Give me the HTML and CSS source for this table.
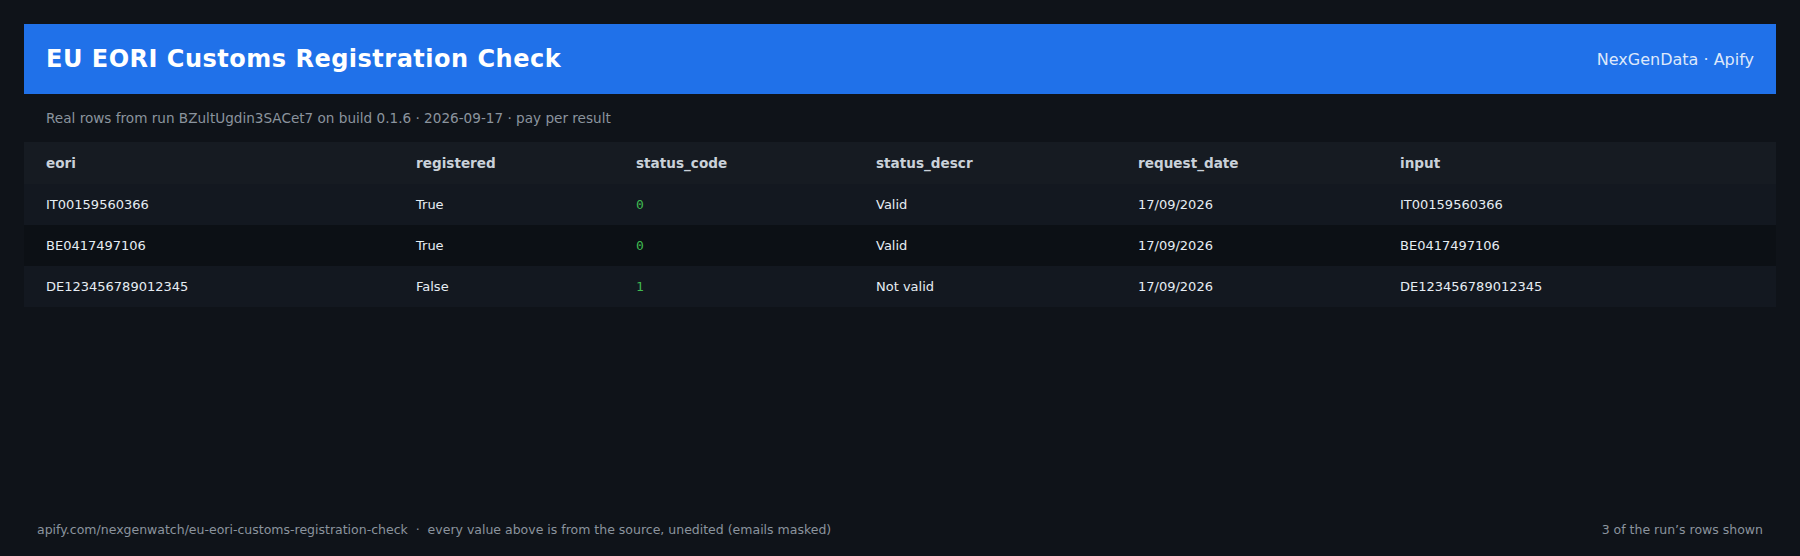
FILE: index.html
```html
<!DOCTYPE html>
<html lang="en">
<head>
<meta charset="utf-8">
<title>EU EORI Customs Registration Check</title>
<link rel="stylesheet" href="styles.css">
</head>
<body>
<div class="page">
  <header class="banner">
    <h1 class="title">EU EORI Customs Registration Check</h1>
    <div class="brand">NexGenData · Apify</div>
  </header>
  <p class="subtitle">Real rows from run BZultUgdin3SACet7 on build 0.1.6 · 2026-09-17 · pay per result</p>
  <table class="data">
    <colgroup>
      <col class="c-eori">
      <col class="c-reg">
      <col class="c-code">
      <col class="c-descr">
      <col class="c-date">
      <col class="c-input">
    </colgroup>
    <thead>
      <tr>
        <th>eori</th>
        <th>registered</th>
        <th>status_code</th>
        <th>status_descr</th>
        <th>request_date</th>
        <th>input</th>
      </tr>
    </thead>
    <tbody>
      <tr>
        <td>IT00159560366</td>
        <td>True</td>
        <td class="num">0</td>
        <td>Valid</td>
        <td>17/09/2026</td>
        <td>IT00159560366</td>
      </tr>
      <tr>
        <td>BE0417497106</td>
        <td>True</td>
        <td class="num">0</td>
        <td>Valid</td>
        <td>17/09/2026</td>
        <td>BE0417497106</td>
      </tr>
      <tr>
        <td>DE123456789012345</td>
        <td>False</td>
        <td class="num">1</td>
        <td>Not valid</td>
        <td>17/09/2026</td>
        <td>DE123456789012345</td>
      </tr>
    </tbody>
  </table>
  <footer class="foot">
    <span>apify.com/nexgenwatch/eu-eori-customs-registration-check &nbsp;·&nbsp; every value above is from the source, unedited (emails masked)</span>
    <span>3 of the run’s rows shown</span>
  </footer>
</div>
</body>
</html>
```
FILE: styles.css
```css
* { box-sizing: border-box; }

html, body {
  margin: 0;
  padding: 0;
  background: #0f1319;
  font-family: "DejaVu Sans", "Liberation Sans", sans-serif;
}

.page {
  height: 556px;
  padding: 24px 24px 0;
  display: flex;
  flex-direction: column;
}

.banner {
  height: 70px;
  background: #2071e9;
  display: flex;
  align-items: center;
  justify-content: space-between;
  padding: 0 22px;
}

.title {
  margin: 0;
  font-size: 24px;
  font-weight: bold;
  color: #ffffff;
  letter-spacing: 0.5px;
}

.brand {
  font-size: 16px;
  color: #dde8fb;
}

.subtitle {
  margin: 14px 0;
  padding: 0 22px;
  font-size: 13.6px;
  line-height: 20px;
  color: #8b949e;
}

.data {
  width: 100%;
  border-collapse: collapse;
  table-layout: fixed;
  font-size: 13px;
}

.c-eori { width: 370px; }
.c-reg { width: 220px; }
.c-code { width: 240px; }
.c-descr { width: 262px; }
.c-date { width: 262px; }
.c-input { width: 398px; }

.data th {
  height: 42px;
  padding: 0 22px;
  text-align: left;
  font-size: 13.6px;
  font-weight: bold;
  color: #c9d1d9;
  background: #161b22;
}

.data td {
  height: 41px;
  padding: 0 22px;
  color: #e6edf3;
}

.data tbody tr:nth-child(odd) td { background: #131820; }
.data tbody tr:nth-child(even) td { background: #0c1015; }

.data td.num {
  font-family: "DejaVu Sans Mono", monospace;
  color: #3fb950;
}

.foot {
  margin-top: auto;
  padding: 0 13px 18px;
  display: flex;
  justify-content: space-between;
  font-size: 12.5px;
  line-height: 16px;
  color: #8b949e;
}
```
